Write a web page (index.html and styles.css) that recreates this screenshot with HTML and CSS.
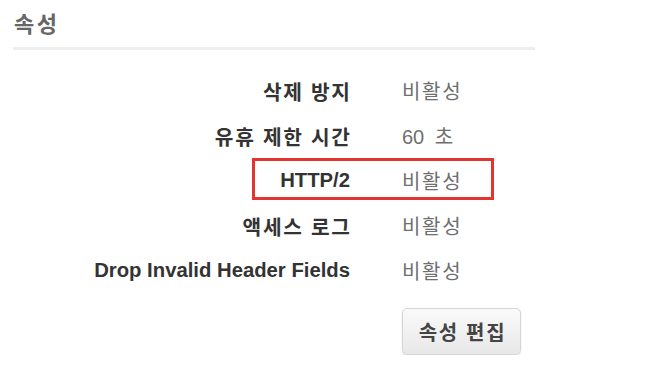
FILE: index.html
```html
<!DOCTYPE html>
<html lang="ko">
<head>
<meta charset="utf-8">
<title>속성</title>
<link rel="stylesheet" href="styles.css">
</head>
<body>
<section class="panel">
  <h2 class="panel-title">속성</h2>
  <div class="props">
    <div class="prop">
      <div class="prop-label ko">삭제 방지</div>
      <div class="prop-value ko">비활성</div>
    </div>
    <div class="prop">
      <div class="prop-label ko">유휴 제한 시간</div>
      <div class="prop-value prop-num">60 초</div>
    </div>
    <div class="prop prop-marked">
      <div class="prop-label">HTTP/2</div>
      <div class="prop-value ko">비활성</div>
      <span class="highlight"></span>
    </div>
    <div class="prop">
      <div class="prop-label ko">액세스 로그</div>
      <div class="prop-value ko">비활성</div>
    </div>
    <div class="prop">
      <div class="prop-label">Drop Invalid Header Fields</div>
      <div class="prop-value ko">비활성</div>
    </div>
  </div>
  <div class="actions">
    <button class="btn" type="button">속성 편집</button>
  </div>
</section>
</body>
</html>
```

FILE: styles.css
```css
html, body {
  margin: 0;
  padding: 0;
  background: #fff;
}

body {
  font-family: "Liberation Sans", "Noto Sans CJK KR", Arial, sans-serif;
}

.panel {
  width: 522px;
  padding: 12px 0 0 13px;
}

.panel-title {
  margin: 0;
  padding: 0 0 9px 1px;
  font-size: 22px;
  line-height: 26px;
  font-weight: bold;
  letter-spacing: 2.5px;
  color: #666;
  border-bottom: 3px solid #eeeeee;
}

.props {
  display: flex;
  flex-direction: column;
  margin-top: 18px;
}

.prop {
  display: flex;
  align-items: center;
  column-gap: 52px;
  height: 45px;
  font-size: 20px;
}

.prop-marked {
  position: relative;
}

.prop-label {
  width: 337px;
  flex: none;
  text-align: right;
  font-weight: bold;
  color: #333;
  font-size: 20.3px;
}

.prop-value {
  color: #6f6f6f;
}

.ko {
  letter-spacing: 1.7px;
}

.prop-num {
  word-spacing: 5px;
}

.prop-label.ko {
  margin-right: -1.7px;
  width: 338.7px;
}

.highlight {
  position: absolute;
  left: 239px;
  top: 0;
  width: 242px;
  height: 42px;
  box-sizing: border-box;
  border: 3px solid #e3342f;
}

.actions {
  display: flex;
  padding-left: 389px;
  margin-top: 15px;
}

.btn {
  width: 119px;
  height: 47px;
  font-family: inherit;
  font-size: 20px;
  font-weight: bold;
  letter-spacing: 1.7px;
  color: #444;
  background: linear-gradient(#fafafa, #e8e8e8);
  border: 1px solid #d6d6d6;
  border-radius: 5px;
  box-shadow: 0 1px 2px rgba(0, 0, 0, 0.12);
  padding: 0 0 0 2px;
}
```
